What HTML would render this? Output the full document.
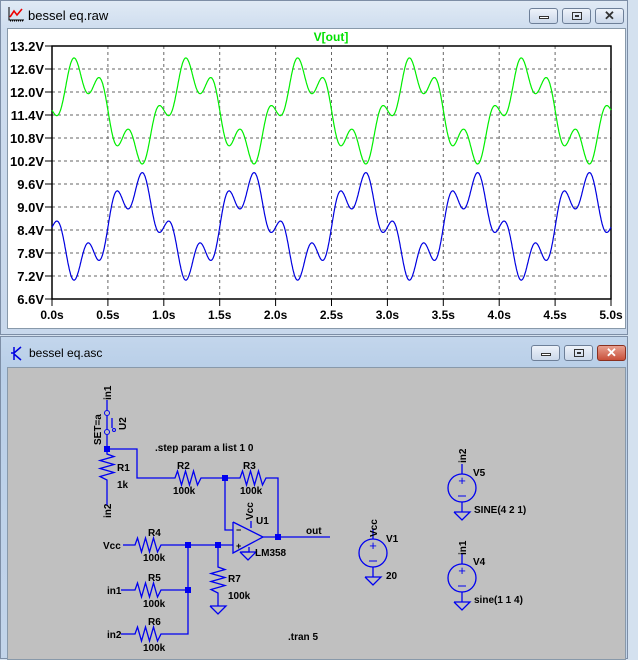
<!DOCTYPE html>
<html><head><meta charset="utf-8"><style>
body{margin:0;width:638px;height:659px;overflow:hidden;background:#d4e1ef;font-family:"Liberation Sans",sans-serif;position:relative}
.win{position:absolute;left:0;width:628px;background:linear-gradient(#e0eaf5,#cddcee 30px,#c8d8ec);border:1px solid #7d8ea6;box-sizing:border-box}
.title{position:absolute;left:27px;font-size:13px;color:#000}
.btn{position:absolute;top:7px;width:29px;height:16px;border:1px solid #6d7f98;border-radius:3px;background:linear-gradient(#eef3fa,#cbd8ea);box-sizing:border-box}
svg text{font-family:"Liberation Sans",sans-serif}
</style></head><body>
<div class="win" style="top:0;height:335px">
 <svg style="position:absolute;left:7px;top:5px" width="17" height="16"><path d="M1 1V14H16" stroke="#000" fill="none"/><path d="M2 11 L6 5 L9 9 L14 3" stroke="#e00" stroke-width="1.6" fill="none"/><path d="M2 15h14" stroke="#000" stroke-dasharray="1 1"/></svg>
 <div class="title" style="top:7px">bessel eq.raw</div>
 <div class="btn" style="left:528px"><div style="position:absolute;left:9px;top:7px;width:10px;height:3px;border:1px solid #333;background:#fff;box-sizing:border-box"></div></div>
 <div class="btn" style="left:561px"><div style="position:absolute;left:9px;top:3px;width:10px;height:8px;border:1px solid #333;box-sizing:border-box"><div style="position:absolute;left:2px;top:2px;width:4px;height:2px;background:#333"></div></div></div>
 <div class="btn" style="left:594px;font-weight:bold;font-size:13px;text-align:center;line-height:13px;color:#333">✕</div>
 <div style="position:absolute;left:6px;top:27px;width:619px;height:301px;background:#fff;border:1px solid #8899aa;box-sizing:border-box"></div>
</div>
<div class="win" style="top:336px;height:323px;background:linear-gradient(#c3d6ec,#b9cfe8 30px,#c2d4ea)">
 <svg style="position:absolute;left:8px;top:8px" width="18" height="18"><path d="M5 2V15M5 8L12 2M5 9L12 15" stroke="#0000e0" stroke-width="1.5" fill="none"/><path d="M2 8h3" stroke="#0000e0" stroke-width="1.5"/></svg>
 <div class="title" style="top:9px;left:28px;font-size:12px">bessel eq.asc</div>
 <div class="btn" style="left:530px;top:8px"><div style="position:absolute;left:9px;top:7px;width:10px;height:3px;border:1px solid #333;background:#fff;box-sizing:border-box"></div></div>
 <div class="btn" style="left:563px;top:8px"><div style="position:absolute;left:9px;top:3px;width:10px;height:8px;border:1px solid #333;box-sizing:border-box"><div style="position:absolute;left:2px;top:2px;width:4px;height:2px;background:#333"></div></div></div>
 <div class="btn" style="left:596px;top:8px;background:linear-gradient(#e8a090,#c8503a);border-color:#8a3020;font-weight:bold;font-size:13px;text-align:center;line-height:13px;color:#fff">✕</div>
 <div style="position:absolute;left:6px;top:30px;width:619px;height:293px;background:#c0c0c0;border:1px solid #8899aa;box-sizing:border-box"></div>
</div>
<svg id="s" style="position:absolute;left:0;top:0" width="638" height="659"></svg>
<script>
var s=document.getElementById('s'),o='';
var X0=52,X1=611,Y0=46;
function Y(v){return Y0+(13.2-v)/0.6*23;}
for(var i=1;i<10;i++){var x=X0+(X1-X0)*i/10;o+='<line x1="'+x+'" y1="46" x2="'+x+'" y2="299" stroke="#666" stroke-dasharray="3 3"/>';}
var lab=['13.2V','12.6V','12.0V','11.4V','10.8V','10.2V','9.6V','9.0V','8.4V','7.8V','7.2V','6.6V'];
for(var i=0;i<12;i++){var y=46+23*i;if(i>0&&i<11)o+='<line x1="52" y1="'+y+'" x2="611" y2="'+y+'" stroke="#666" stroke-dasharray="3 3"/>';
o+='<line x1="45" y1="'+y+'" x2="52" y2="'+y+'" stroke="#000"/><text x="44" y="'+(y+5)+'" font-size="13" font-weight="bold" text-anchor="end">'+lab[i]+'</text>';}
for(var i=0;i<=10;i++){var x=X0+(X1-X0)*i/10;o+='<line x1="'+x+'" y1="299" x2="'+x+'" y2="306" stroke="#000"/><text x="'+x+'" y="319" font-size="12" font-weight="bold" text-anchor="middle">'+(i/2).toFixed(1)+'s</text>';}
o+='<rect x="52" y="46" width="559" height="253" fill="none" stroke="#000" stroke-width="1.5"/>';
o+='<text x="331" y="41" font-size="12" font-weight="bold" fill="#00e000" text-anchor="middle">V[out]</text>';
function wave(c,sg,b,col){var d='';for(var k=0;k<=1200;k++){var t=5*k/1200;var v=c+sg*(Math.sin(2*Math.PI*t)+b*Math.cos(8*Math.PI*(t-0.19)));d+=(k?'L':'M')+(X0+(X1-X0)*t/5).toFixed(1)+' '+Y(v).toFixed(1);}
o+='<path d="'+d+'" fill="none" stroke="'+col+'" stroke-width="1.2"/>';}
wave(11.5,1,0.45,'#00ee00');wave(8.5,-1,0.47,'#0000e0');
var B='#0000f0';
function L(p){o+='<polyline points="'+p+'" fill="none" stroke="'+B+'" stroke-width="1.3"/>';}
function T(x,y,t,a,sz){o+='<text x="'+x+'" y="'+y+'" font-size="'+(sz||10)+'" font-weight="bold" '+(a?'text-anchor="'+a+'"':'')+'>'+t+'</text>';}
function V(x,y,t){o+='<text transform="translate('+x+','+y+') rotate(-90)" font-size="10" font-weight="bold">'+t+'</text>';}
function J(x,y){o+='<rect x="'+(x-3)+'" y="'+(y-3)+'" width="6" height="6" fill="'+B+'"/>';}
function RH(x,y){var p=x+','+y+' '+(x+5)+','+y;for(var i=0;i<6;i++)p+=' '+(x+7.5+i*4)+','+(y+(i%2?7:-7));p+=' '+(x+31)+','+y+' '+(x+36)+','+y;L(p);}
function RV(x,y){var p=x+','+y+' '+x+','+(y+5);for(var i=0;i<6;i++)p+=' '+(x+(i%2?-7:7))+','+(y+7.5+i*4);p+=' '+x+','+(y+31)+' '+x+','+(y+36);L(p);}
function G(x,y){L((x-8)+','+y+' '+(x+8)+','+y+' '+x+','+(y+8)+' '+(x-8)+','+y);}
function SRC(x,y){o+='<circle cx="'+x+'" cy="'+y+'" r="14" fill="none" stroke="'+B+'" stroke-width="1.3"/>';L(x+','+(y-14)+' '+x+','+(y-24));L(x+','+(y+14)+' '+x+','+(y+24));
o+='<text x="'+x+'" y="'+(y-3)+'" font-size="13" fill="'+B+'" text-anchor="middle">+</text><line x1="'+(x-4)+'" y1="'+(y+8)+'" x2="'+(x+4)+'" y2="'+(y+8)+'" stroke="'+B+'"/>';G(x,y+24);}
V(111,400,'in1');L('107,400 107,410');o+='<circle cx="107" cy="413" r="2.5" fill="none" stroke="'+B+'"/><circle cx="107" cy="432" r="2.5" fill="none" stroke="'+B+'"/>';
L('107,416 107,429');L('112,418 112,428');o+='<circle cx="114" cy="430" r="1.5" fill="none" stroke="'+B+'"/>';L('107,435 107,449');
V(126,430,'U2');V(101,445,'SET=a');
J(107,449);L('107,449 137,449 137,478 170,478');RV(107,449);T(117,471,'R1');T(117,488,'1k');
V(111,518,'in2');L('107,485 107,505');
T(155,451,'.step param a list 1 0',0,10);
RH(170,478);T(177,469,'R2');T(173,494,'100k');J(225,478);L('206,478 235,478');RH(235,478);T(243,469,'R3');T(240,494,'100k');L('271,478 278,478 278,537');
L('225,478 225,530 233,530');L('233,522 233,553 263,537 233,522');T(236,533,'−',0,9);T(236,549,'+',0,9);
L('251,528 251,521');V(253,520,'Vcc');T(256,524,'U1');L('249,547 249,552 242,552');G(248,552);T(255,556,'LM358');
J(278,537);L('263,537 330,537');T(306,534,'out');
T(103,549,'Vcc');L('123,545 130,545');RH(130,545);T(148,536,'R4');T(143,561,'100k');L('166,545 233,545');J(188,545);J(218,545);
T(107,594,'in1');L('121,590 130,590');RH(130,590);T(148,581,'R5');T(143,607,'100k');L('166,590 188,590');J(188,590);
T(107,638,'in2');L('121,634 130,634');RH(130,634);T(148,625,'R6');T(143,651,'100k');L('166,634 188,634 188,545');
RV(218,562);L('218,545 218,562');L('218,598 218,606');G(218,606);T(228,582,'R7');T(228,599,'100k');
T(288,640,'.tran 5');
SRC(373,553);V(377,537,'Vcc');T(386,542,'V1');T(386,579,'20');
SRC(462,488);V(466,463,'in2');T(473,476,'V5');T(474,513,'SINE(4 2 1)');
SRC(462,578);V(466,555,'in1');T(473,565,'V4');T(474,603,'sine(1 1 4)');
s.innerHTML=o;
</script>
</body></html>
